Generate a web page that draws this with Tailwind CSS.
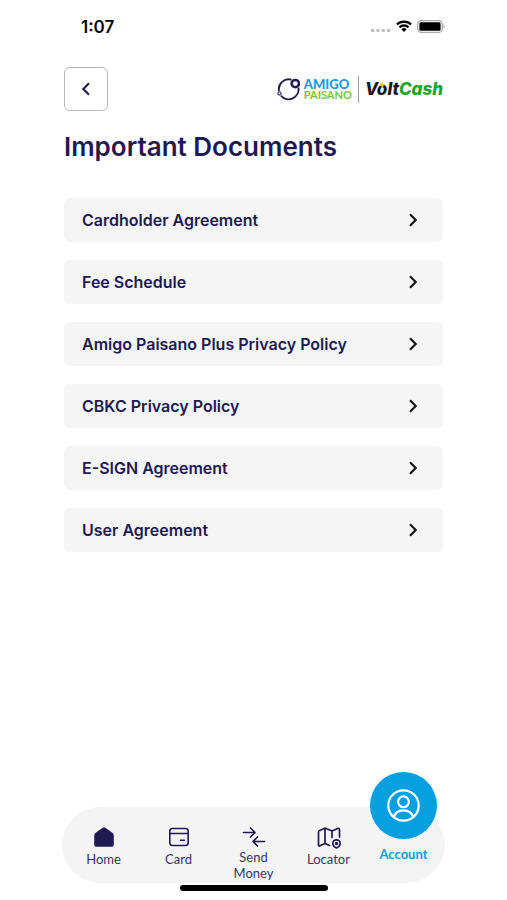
<!DOCTYPE html>
<html lang="en">
<head>
<meta charset="utf-8">
<meta name="viewport" content="width=device-width, initial-scale=1">
<title>Important Documents</title>
<script src="https://cdn.jsdelivr.net/npm/@tailwindcss/browser@4"></script>
</head>
<body class="bg-white text-[#211951] font-['Inter',sans-serif]">
<div class="flex min-h-screen flex-col">
  <header class="px-16">
    <div class="flex h-[54px] items-center justify-between pl-[17px] text-black">
      <span class="text-[17px] leading-5 font-semibold">1:07</span>
      <div class="-mr-0.5 flex items-center gap-[5px]">
        <svg class="mt-1.5 h-[3px] w-5" viewBox="0 0 20 3" fill="#bdbdbd" aria-hidden="true"><rect width="3.4" height="3" rx="1"/><rect x="5.3" width="3.4" height="3" rx="1"/><rect x="10.6" width="3.4" height="3" rx="1"/><rect x="15.9" width="3.4" height="3" rx="1"/></svg>
        <svg class="-mt-0.5 h-3 w-4" viewBox="0 0 16 12" fill="none" stroke="#000" stroke-width="2.3" aria-hidden="true"><path d="M.9 4.5a10.2 10.2 0 0 1 14.2 0M3.5 7.3a6.5 6.5 0 0 1 9 0"/><path d="M8 12 5.3 9.3a3.9 3.9 0 0 1 5.4 0Z" fill="#000" stroke="none"/></svg>
        <svg class="-mt-0.5 h-[13px] w-7" viewBox="0 0 28 13" aria-hidden="true"><rect x=".7" y=".7" width="24.6" height="11.600" rx="3.600" fill="#fff" stroke="#aaa" stroke-width="1.300"/><rect x="2.400" y="2.300" width="21.200" height="8.400" rx="1.500" fill="#000"/><path d="M26.500 4.400c1.800.6 1.800 3.600 0 4.200Z" fill="#aaa"/></svg>
      </div>
    </div>
    <div class="mt-[13px] flex items-center justify-between">
      <button type="button" aria-label="Back" class="flex size-11 items-center justify-center rounded-md border border-[#b5b5bd] bg-white">
        <svg class="h-3.5 w-2.5" viewBox="0 0 10 14" fill="none" stroke="#211951" stroke-width="2.1" aria-hidden="true"><path d="M8 1.3 2.3 7 8 12.7"/></svg>
      </button>
      <div class="flex items-center">
        <svg class="mr-1 size-[23px]" viewBox="0 0 23 23" fill="none" stroke="#211951" aria-hidden="true"><path d="M14.500 1.700A9.900 9.900 0 0 0 2 13M4 17.600a9.900 9.900 0 0 0 17.400-8" stroke-width="1.900"/><circle cx="18.300" cy="5.600" r="3.700" fill="#fff" stroke-width="2.500"/><circle cx="2.500" cy="15.400" r="1.600" fill="#fff" stroke-width="1.100"/></svg>
        <div class="flex flex-col font-['Lato',sans-serif]">
          <span class="text-[13px] leading-3 font-black text-[#159de0]">AMIGO</span>
          <span class="text-[11px] leading-[10px] font-bold text-[#7ac143]">PAISANO</span>
        </div>
        <span class="mx-1.5 h-[27px] w-px bg-[#9c99ae]"></span>
        <div class="relative flex items-center text-[17px] leading-5 font-extrabold italic">
          <span class="text-[#171717]">Volt</span><span class="text-[#16a52c]">Cash</span>
          <svg class="absolute top-0.5 left-3.5 h-2 w-1.5" viewBox="0 0 6 8" fill="#f5c400" aria-hidden="true"><path d="M4 0 0 5h2.500L2 8l4-5H3.500Z"/></svg>
        </div>
      </div>
    </div>
  </header>
  <main class="px-16">
    <h1 class="mt-5 text-[26px] leading-8 font-semibold whitespace-nowrap">Important Documents</h1>
    <ul class="mt-[35px] flex flex-col gap-[18px] text-[16px] font-semibold">
      <li><a href="#cardholder" class="flex h-11 items-center justify-between rounded-md bg-[#f5f5f5] pr-[25px] pl-[18px]">Cardholder Agreement<svg class="h-3.5 w-2.5" viewBox="0 0 10 14" fill="none" stroke="#171717" stroke-width="2.2" aria-hidden="true"><path d="m2 1.3 5.7 5.7L2 12.7"/></svg></a></li>
      <li><a href="#fees" class="flex h-11 items-center justify-between rounded-md bg-[#f5f5f5] pr-[25px] pl-[18px]">Fee Schedule<svg class="h-3.5 w-2.5" viewBox="0 0 10 14" fill="none" stroke="#171717" stroke-width="2.2" aria-hidden="true"><path d="m2 1.3 5.7 5.7L2 12.7"/></svg></a></li>
      <li><a href="#plus-privacy" class="flex h-11 items-center justify-between rounded-md bg-[#f5f5f5] pr-[25px] pl-[18px]">Amigo Paisano Plus Privacy Policy<svg class="h-3.5 w-2.5" viewBox="0 0 10 14" fill="none" stroke="#171717" stroke-width="2.2" aria-hidden="true"><path d="m2 1.3 5.7 5.7L2 12.7"/></svg></a></li>
      <li><a href="#cbkc-privacy" class="flex h-11 items-center justify-between rounded-md bg-[#f5f5f5] pr-[25px] pl-[18px]">CBKC Privacy Policy<svg class="h-3.5 w-2.5" viewBox="0 0 10 14" fill="none" stroke="#171717" stroke-width="2.2" aria-hidden="true"><path d="m2 1.3 5.7 5.7L2 12.7"/></svg></a></li>
      <li><a href="#esign" class="flex h-11 items-center justify-between rounded-md bg-[#f5f5f5] pr-[25px] pl-[18px]">E-SIGN Agreement<svg class="h-3.5 w-2.5" viewBox="0 0 10 14" fill="none" stroke="#171717" stroke-width="2.2" aria-hidden="true"><path d="m2 1.3 5.7 5.7L2 12.7"/></svg></a></li>
      <li><a href="#user" class="flex h-11 items-center justify-between rounded-md bg-[#f5f5f5] pr-[25px] pl-[18px]">User Agreement<svg class="h-3.5 w-2.5" viewBox="0 0 10 14" fill="none" stroke="#171717" stroke-width="2.2" aria-hidden="true"><path d="m2 1.3 5.7 5.7L2 12.7"/></svg></a></li>
    </ul>
  </main>
  <footer class="mt-auto px-[62px] pb-[9px]">
    <nav class="grid h-[76px] grid-cols-5 rounded-full bg-[#f4f4f4] px-1 text-center font-['Lato',sans-serif] text-[13px] leading-4 text-[#3b3565]">
      <a href="#home" class="flex flex-col items-center gap-1 pt-5">
        <svg class="size-5" viewBox="0 0 20 20" fill="#211951" aria-hidden="true"><path d="M8.700.7Q10-.3 11.300.7l7 5.100Q19.800 7 19.800 8.700v9.100q0 2-2 2H2.200q-2 0-2-2V8.700Q.2 7 1.700 5.800Z"/></svg>
        Home
      </a>
      <a href="#card" class="flex flex-col items-center gap-1 pt-5">
        <svg class="size-5" viewBox="0 0 20 20" fill="none" stroke="#211951" stroke-width="1.6" aria-hidden="true"><rect x=".8" y="1.500" width="18.400" height="17" rx="2.800"/><path d="M.8 6.500h18.400M11 13.300h4.800"/></svg>
        Card
      </a>
      <a href="#send" class="flex flex-col items-center gap-0.5 pt-5">
        <svg class="h-5 w-6" viewBox="0 0 24 20" fill="none" stroke="#211951" stroke-width="1.700" stroke-linecap="round" stroke-linejoin="round" aria-hidden="true"><path d="M1.500 5.500h11.500M8.500 1l4.500 4.500L8.500 10M22.500 14.500H11M15.500 10 11 14.500l4.500 4.500"/></svg>
        Send<br>Money
      </a>
      <a href="#locator" class="flex flex-col items-center gap-1 pt-5">
        <svg class="h-[22px] w-6 -mb-0.5" viewBox="0 0 24 22" fill="none" stroke="#211951" stroke-width="1.700" stroke-linecap="round" stroke-linejoin="round" aria-hidden="true"><path d="M1.500 5.300q0-1 .9-1.500L8 1l7 3 5.800-2.500q1.700-.5 1.700 1.200V10M1.500 5v13q0 1.500 1.400.8L8 16.500l4.500 2M8 1v15.500M15 4v6.500"/><path d="M19.500 21c-2.500-1.200-3.700-2.600-3.700-4.500a3.700 3.700 0 0 1 7.400 0c0 1.900-1.200 3.300-3.700 4.500Z"/><circle cx="19.500" cy="16.500" r=".8"/></svg>
        Locator
      </a>
      <a href="#account" aria-current="page" class="-mt-[35px] flex flex-col items-center gap-[7px] font-bold text-[#069fe0]">
        <span class="flex size-[67px] shrink-0 items-center justify-center rounded-full bg-[#069fe0]">
          <svg class="size-[33px]" viewBox="0 0 33 33" fill="none" stroke="#fff" stroke-width="2.200" aria-hidden="true"><circle cx="16.500" cy="16.500" r="15.200"/><circle cx="16.500" cy="12.800" r="5.400"/><path d="M6.800 28.200c1.200-4.500 5-6.900 9.700-6.900s8.500 2.400 9.700 6.900"/></svg>
        </span>
        Account
      </a>
    </nav>
    <div class="mx-auto mt-0.5 h-1.5 w-[148px] rounded-full bg-black"></div>
  </footer>
</div>
</body>
</html>
